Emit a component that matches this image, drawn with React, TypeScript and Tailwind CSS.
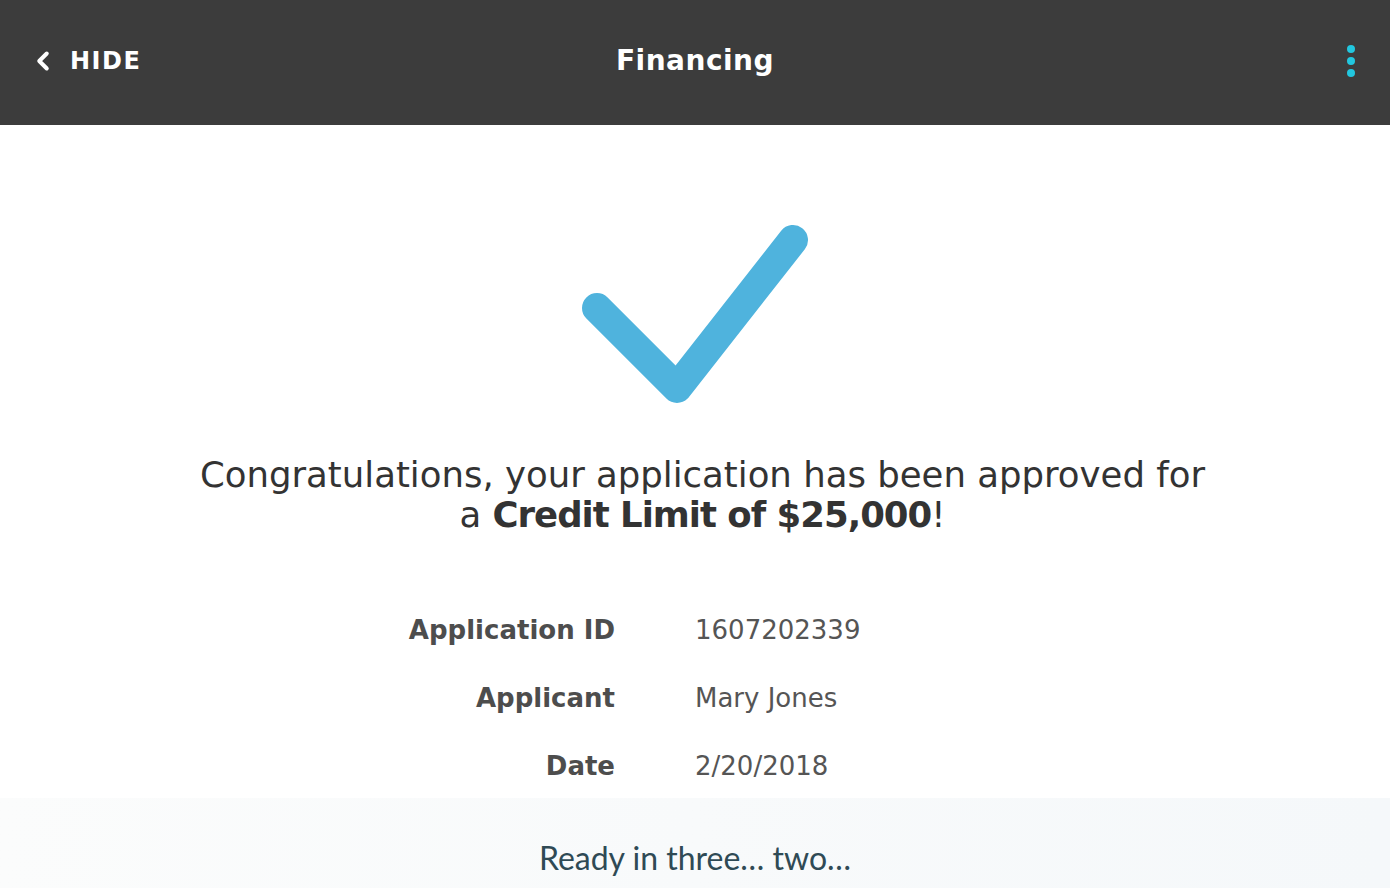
import { ChevronLeft } from 'lucide-react';

const details = [
  { label: 'Application ID', value: '1607202339' },
  { label: 'Applicant', value: 'Mary Jones' },
  { label: 'Date', value: '2/20/2018' },
];

export default function App() {
  return (
    <div
      className="w-[1390px] h-[888px] flex flex-col bg-white overflow-hidden"
      style={{ fontFamily: '"DejaVu Sans", "Open Sans", sans-serif' }}
    >
      {/* Header */}
      <div className="h-[125px] shrink-0 bg-[#3c3c3c] grid grid-cols-3 items-center px-[28px] pb-[4px]">
        <button className="flex items-center gap-[12px] text-white">
          <ChevronLeft className="size-[30px]" strokeWidth={3.2} />
          <span className="text-[24px] font-bold tracking-[1.5px]">HIDE</span>
        </button>
        <h1 className="text-center text-white text-[28px] font-bold tracking-[0.5px]">Financing</h1>
        <div className="flex justify-end pr-[7px]">
          <div className="flex flex-col gap-[4px]">
            <span className="size-[8px] rounded-full bg-[#22c7df]" />
            <span className="size-[8px] rounded-full bg-[#22c7df]" />
            <span className="size-[8px] rounded-full bg-[#22c7df]" />
          </div>
        </div>
      </div>

      {/* Body */}
      <div className="flex-1 flex flex-col items-center pt-[98px]">
        <svg width="260" height="210" viewBox="0 0 260 210" className="ml-[2px]">
          <polyline
            points="31,85 111,165 227,17"
            fill="none"
            stroke="#4fb3dd"
            strokeWidth="30"
            strokeLinecap="round"
            strokeLinejoin="round"
          />
        </svg>

        <p className="mt-[22px] pl-[15px] text-center text-[35.5px] leading-[40px] text-[#333]">
          Congratulations, your application has been approved for
          <br />a <span className="font-bold tracking-[-1px]">Credit Limit of $25,000</span>!
        </p>

        <div className="mt-[79px] grid grid-cols-[615px_1fr] gap-x-[80px] gap-y-[36px] w-full text-[26px] leading-[32px] text-[#4d4d4d]">
          {details.map((d) => (
            <div key={d.label} className="contents">
              <div className="text-right font-bold">{d.label}</div>
              <div className="text-[#555]">{d.value}</div>
            </div>
          ))}
        </div>
      </div>

      {/* Footer */}
      <div className="h-[90px] shrink-0 bg-gradient-to-r from-[#fbfcfc] to-[#f5f8fa] flex items-end justify-center pb-[6px]">
        <p
          className="text-[32px] text-[#2f4a55]"
          style={{ fontFamily: 'Lato, sans-serif' }}
        >
          Ready in three… two…
        </p>
      </div>
    </div>
  );
}
